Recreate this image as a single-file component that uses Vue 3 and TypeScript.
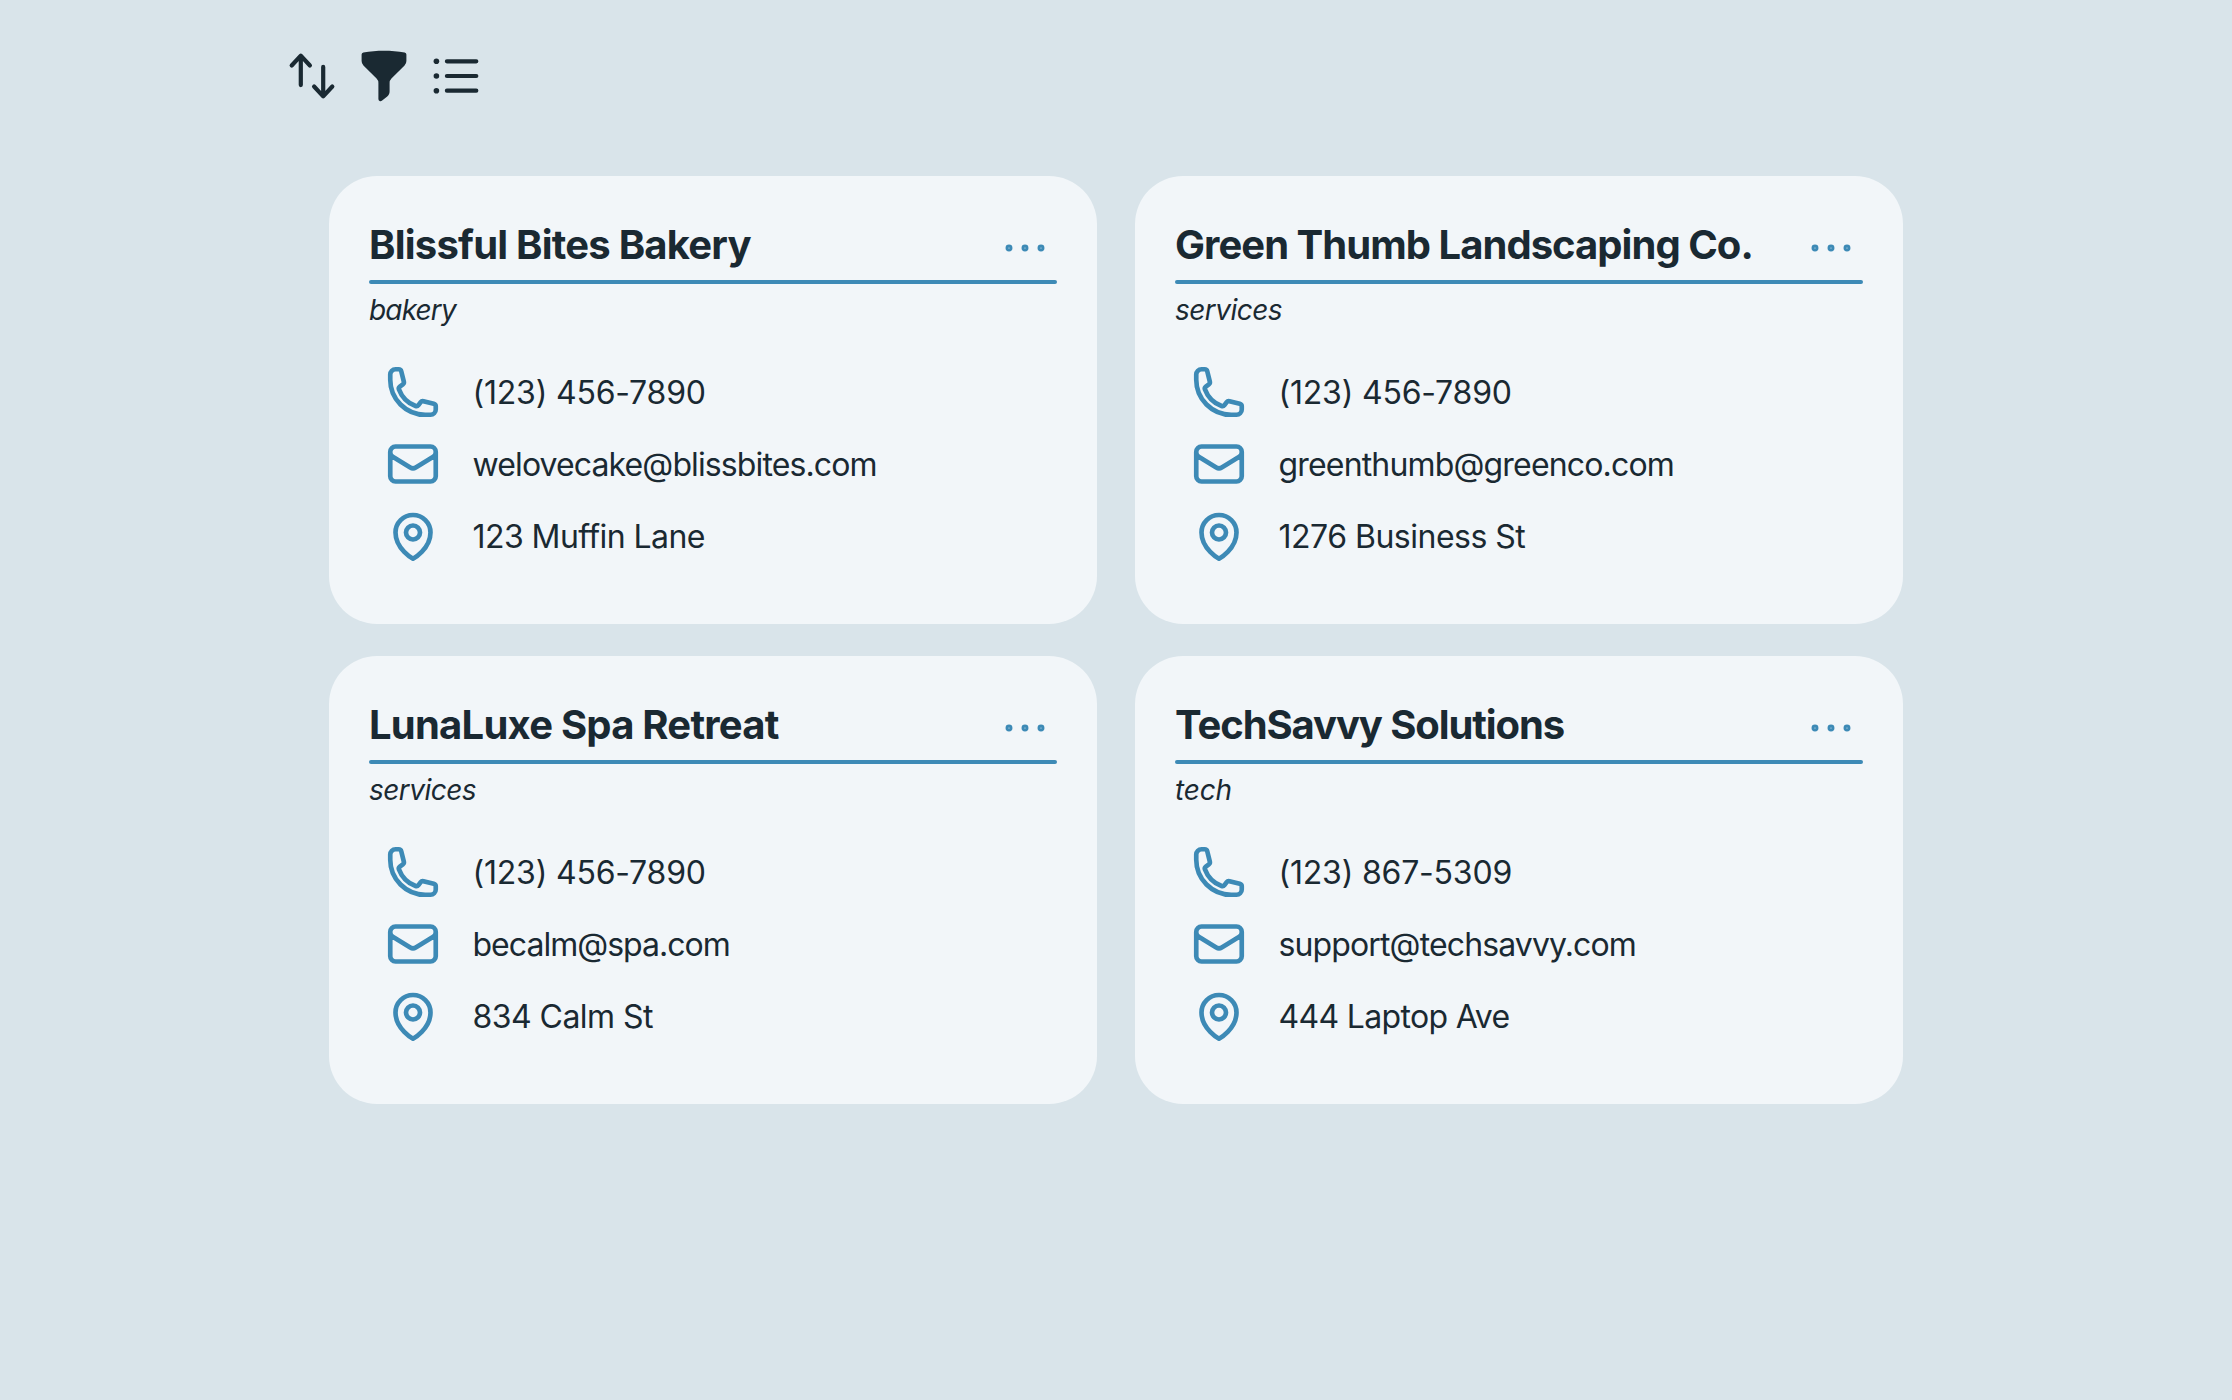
<script setup lang="ts">
interface Label {
  text: string
  // letter spacing in px
  tracking: number
}

interface Business {
  name: Label
  category: Label
  phone: Label
  email: Label
  address: Label
}

const label = (text: string, tracking: number): Label => ({ text, tracking })

const spacing = (item: Label) => ({ letterSpacing: `${item.tracking}px` })

const businesses: Business[] = [
  {
    name: label('Blissful Bites Bakery', -0.78),
    category: label('bakery', -0.85),
    phone: label('(123) 456-7890', -0.2),
    email: label('welovecake@blissbites.com', -0.88),
    address: label('123 Muffin Lane', -0.56),
  },
  {
    name: label('Green Thumb Landscaping Co.', -0.96),
    category: label('services', -0.53),
    phone: label('(123) 456-7890', -0.2),
    email: label('greenthumb@greenco.com', -0.83),
    address: label('1276 Business St', -0.5),
  },
  {
    name: label('LunaLuxe Spa Retreat', -0.77),
    category: label('services', -0.53),
    phone: label('(123) 456-7890', -0.2),
    email: label('becalm@spa.com', -0.98),
    address: label('834 Calm St', -0.54),
  },
  {
    name: label('TechSavvy Solutions', -1.09),
    category: label('tech', -0.2),
    phone: label('(123) 867-5309', -0.2),
    email: label('support@techsavvy.com', -0.87),
    address: label('444 Laptop Ave', -0.68),
  },
]
</script>

<template>
  <main class="page">
    <nav class="toolbar">
      <svg class="tool" viewBox="0 0 20 20" fill="currentColor">
        <path d="M2.24 6.8a.75.75 0 0 0 1.06-.04l1.95-2.1v8.59a.75.75 0 0 0 1.5 0V4.66l1.95 2.1a.75.75 0 1 0 1.1-1.02l-3.25-3.5a.75.75 0 0 0-1.1 0L2.2 5.74a.75.75 0 0 0 .04 1.06Zm8 6.4a.75.75 0 0 0-.04 1.06l3.25 3.5a.75.75 0 0 0 1.1 0l3.25-3.5a.75.75 0 1 0-1.1-1.02l-1.95 2.1V6.75a.75.75 0 0 0-1.5 0v8.59l-1.95-2.1a.75.75 0 0 0-1.06-.04Z" />
      </svg>
      <svg class="tool" viewBox="0 0 20 20" fill="currentColor">
        <path d="M2.628 1.601C5.028 1.206 7.49 1 10 1s4.973.206 7.372.601a.75.75 0 0 1 .628.74v2.288a2.25 2.25 0 0 1-.659 1.59l-4.682 4.683a2.25 2.25 0 0 0-.659 1.59v3.037c0 .684-.31 1.33-.844 1.757l-1.937 1.55A.75.75 0 0 1 8 18.25v-5.757a2.25 2.25 0 0 0-.659-1.591L2.659 6.22A2.25 2.25 0 0 1 2 4.629V2.34a.75.75 0 0 1 .628-.74Z" />
      </svg>
      <svg class="tool" viewBox="0 0 20 20" fill="currentColor">
        <path d="M6 4.75A.75.75 0 0 1 6.75 4h10.5a.75.75 0 0 1 0 1.5H6.75A.75.75 0 0 1 6 4.75ZM6 10a.75.75 0 0 1 .75-.75h10.5a.75.75 0 0 1 0 1.5H6.75A.75.75 0 0 1 6 10Zm0 5.25a.75.75 0 0 1 .75-.75h10.5a.75.75 0 0 1 0 1.5H6.75a.75.75 0 0 1-.75-.75Z" />
        <circle cx="3" cy="4.75" r="1" />
        <circle cx="3" cy="10" r="1" />
        <circle cx="3" cy="15.25" r="1" />
      </svg>
    </nav>

    <section class="cards">
      <article v-for="item in businesses" :key="item.name.text" class="card">
        <header class="card-head">
          <h2 class="name" :style="spacing(item.name)">{{ item.name.text }}</h2>
          <svg class="more" viewBox="0 0 24 24">
            <circle cx="6" cy="12" r=".75" />
            <circle cx="12" cy="12" r=".75" />
            <circle cx="18" cy="12" r=".75" />
          </svg>
        </header>
        <div class="rule"></div>
        <p class="category" :style="spacing(item.category)">{{ item.category.text }}</p>
        <ul class="details">
          <li class="row">
            <svg class="icon" viewBox="0 0 24 24">
              <path d="M2.25 6.75c0 8.284 6.716 15 15 15h2.25a2.25 2.25 0 0 0 2.25-2.25v-1.372c0-.516-.351-.966-.852-1.091l-4.423-1.106c-.44-.11-.902.055-1.173.417l-.97 1.293c-.282.376-.769.542-1.21.38a12.035 12.035 0 0 1-7.143-7.143c-.162-.441.004-.928.38-1.21l1.293-.97c.363-.271.527-.734.417-1.173L6.963 3.102a1.125 1.125 0 0 0-1.091-.852H4.5A2.25 2.25 0 0 0 2.25 4.5v2.25Z" />
            </svg>
            <span class="value" :style="spacing(item.phone)">{{ item.phone.text }}</span>
          </li>
          <li class="row">
            <svg class="icon" viewBox="0 0 24 24">
              <path d="M21.75 6.75v10.5a2.25 2.25 0 0 1-2.25 2.25h-15a2.25 2.25 0 0 1-2.25-2.25V6.75m19.5 0A2.25 2.25 0 0 0 19.5 4.5h-15a2.25 2.25 0 0 0-2.25 2.25m19.5 0v.243a2.25 2.25 0 0 1-1.07 1.916l-7.5 4.615a2.25 2.25 0 0 1-2.36 0L3.32 8.91a2.25 2.25 0 0 1-1.07-1.916V6.75" />
            </svg>
            <span class="value" :style="spacing(item.email)">{{ item.email.text }}</span>
          </li>
          <li class="row">
            <svg class="icon" viewBox="0 0 24 24">
              <path d="M15 10.5a3 3 0 1 1-6 0 3 3 0 0 1 6 0Z" />
              <path d="M19.5 10.5c0 7.142-7.5 11.25-7.5 11.25S4.5 17.642 4.5 10.5a7.5 7.5 0 1 1 15 0Z" />
            </svg>
            <span class="value" :style="spacing(item.address)">{{ item.address.text }}</span>
          </li>
        </ul>
      </article>
    </section>
  </main>
</template>

<style>
body {
  background: #d9e4ea;
}
</style>

<style scoped>
.page {
  box-sizing: border-box;
  min-height: 1400px;
  padding: 48px 284px 0;
  background: #d9e4ea;
  color: #1a2932;
  font-family: Inter, 'Liberation Sans', sans-serif;
}

.toolbar {
  display: flex;
  gap: 16px;
}

.tool {
  display: block;
  width: 56px;
  height: 56px;
}

.cards {
  display: grid;
  grid-template-columns: 768px 768px;
  gap: 32px 38px;
  margin: 72px 0 0 45px;
}

.card {
  box-sizing: border-box;
  height: 448px;
  padding: 40px;
  border-radius: 48px;
  background: #f2f6f9;
}

.card-head {
  display: flex;
  align-items: center;
  justify-content: space-between;
  height: 64px;
}

.name {
  margin: -7px 0 0;
  font-size: 40px;
  line-height: 56px;
  font-weight: 700;
  white-space: nowrap;
}

.more {
  width: 64px;
  height: 64px;
  fill: none;
  stroke: #3d8ab6;
  stroke-width: 1.1;
}

.rule {
  height: 4px;
  border-radius: 2px;
  background: #3d8ab6;
}

.category {
  margin: 6px 0 0;
  font-size: 28px;
  line-height: 40px;
  font-style: italic;
  font-weight: 430;
}

.details {
  display: flex;
  flex-direction: column;
  gap: 16px;
  margin: 34px 0 0;
  padding: 0 0 0 16px;
  list-style: none;
}

.row {
  display: flex;
  align-items: center;
  gap: 31.5px;
  height: 56px;
  font-size: 32px;
  line-height: 48px;
  font-weight: 440;
}

.value {
  padding-top: 2px;
}

.icon {
  width: 56px;
  height: 56px;
  fill: none;
  stroke: #3d8ab6;
  stroke-width: 2;
  stroke-linecap: round;
  stroke-linejoin: round;
}
</style>
